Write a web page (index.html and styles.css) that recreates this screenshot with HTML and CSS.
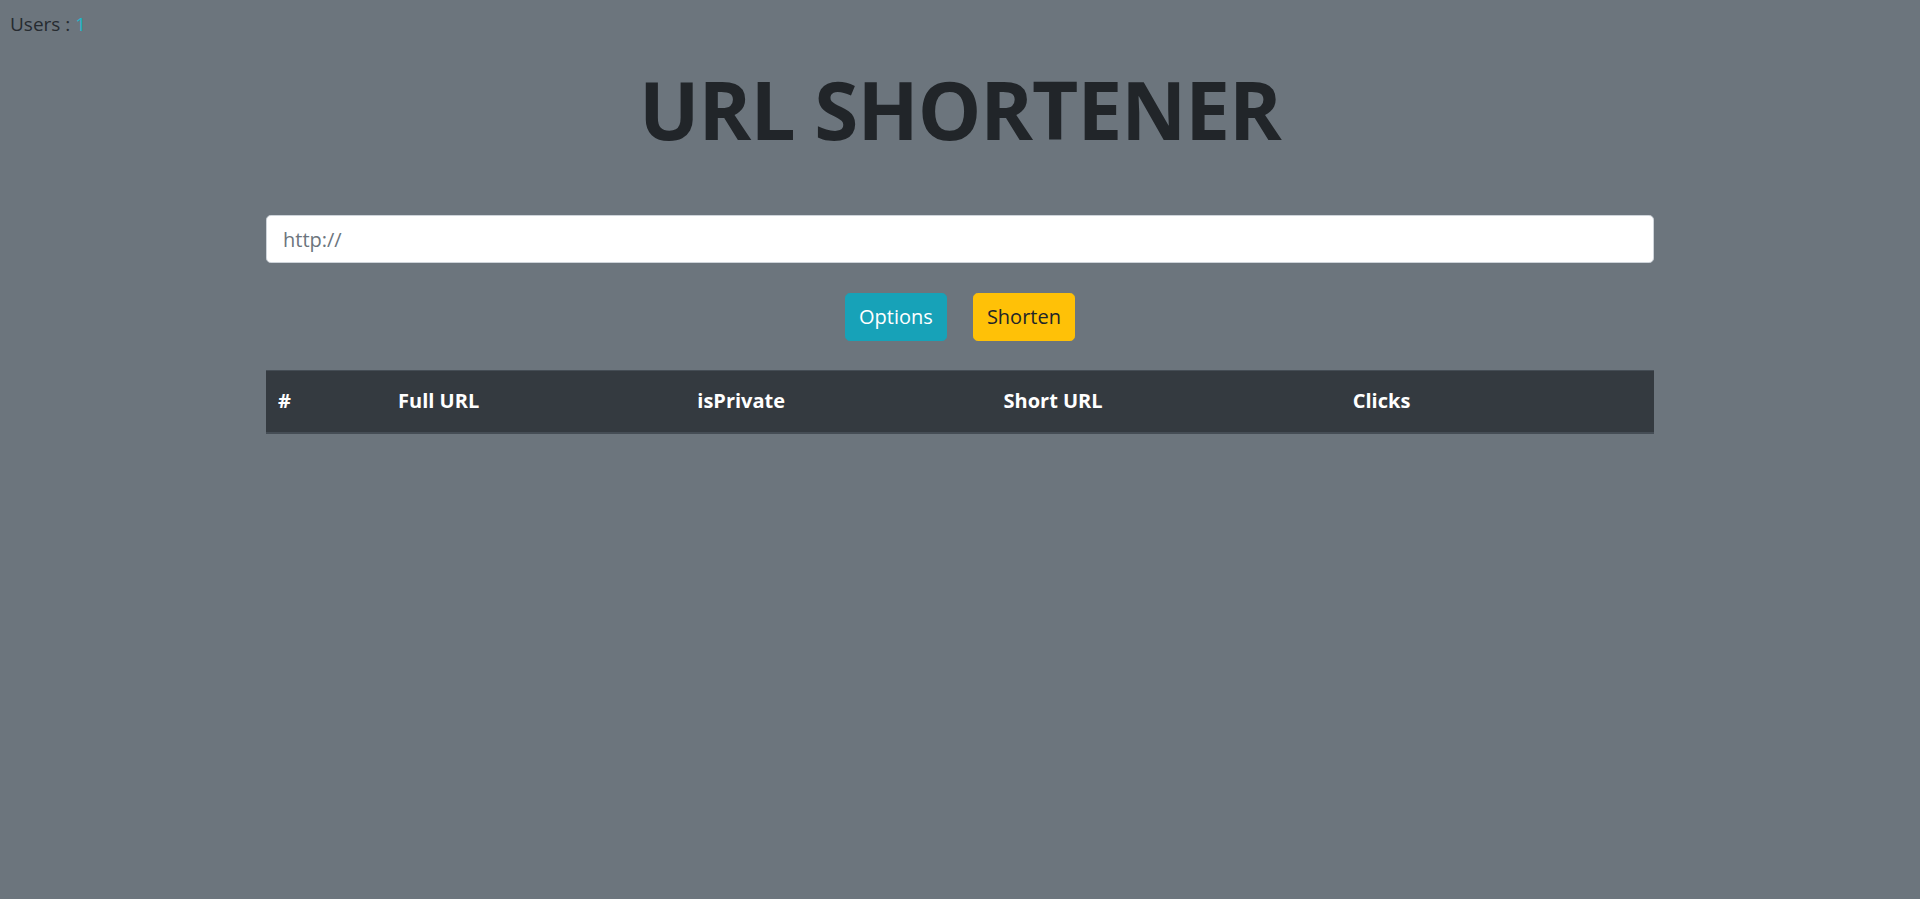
FILE: index.html
```html
<!DOCTYPE html>
<html lang="en">
<head>
<meta charset="utf-8">
<title>URL Shortener</title>
<link rel="stylesheet" href="styles.css">
</head>
<body>
<div class="users">Users : <span class="users-count">1</span></div>
<main class="container">
  <h1 class="title">URL SHORTENER</h1>
  <form class="shorten-form">
    <input class="url-input" type="text" placeholder="http://">
    <div class="actions">
      <button type="button" class="btn btn-info">Options</button>
      <button type="submit" class="btn btn-warning">Shorten</button>
    </div>
  </form>
  <table class="url-table">
    <thead>
      <tr>
        <th class="col-num">#</th>
        <th class="col-full">Full URL</th>
        <th class="col-private">isPrivate</th>
        <th class="col-short">Short URL</th>
        <th class="col-clicks">Clicks</th>
      </tr>
    </thead>
    <tbody></tbody>
  </table>
</main>
</body>
</html>
```

FILE: styles.css
```css
* { box-sizing: border-box; }

html, body {
  margin: 0;
  padding: 0;
}

body {
  background: #6c757d;
  color: #212529;
  font-family: "Open Sans", "Noto Sans", sans-serif;
  font-size: 16px;
  line-height: 1.5;
  min-height: 899px;
}

.users {
  padding: 9px 10px 0;
  font-size: 19px;
  line-height: 30px;
  color: #262b30;
}

.users-count {
  color: #1fb5c9;
}

.container {
  width: 1388px;
  margin: 0 auto;
}

.title {
  margin: 22px 0 0;
  font-size: 80px;
  line-height: 96px;
  font-weight: 700;
  letter-spacing: -1px;
  text-align: center;
  color: #212529;
}

.shorten-form {
  margin-top: 58px;
}

.url-input {
  display: block;
  width: 100%;
  height: 48px;
  padding: 8px 16px;
  font-family: inherit;
  font-size: 20px;
  line-height: 1.5;
  color: #495057;
  background: #fff;
  border: 1px solid #ced4da;
  border-radius: 4.8px;
  outline: none;
}

.url-input::placeholder {
  color: #6c757d;
  opacity: 1;
}

.actions {
  display: flex;
  justify-content: center;
  gap: 26px;
  margin-top: 30px;
}

.btn {
  height: 48px;
  padding: 8px 13px;
  font-family: inherit;
  font-size: 20px;
  line-height: 1.5;
  border: 1px solid transparent;
  border-radius: 4.8px;
  cursor: pointer;
}

.btn-info {
  background: #17a2b8;
  border-color: #17a2b8;
  color: #fff;
}

.btn-warning {
  background: #ffc107;
  border-color: #ffc107;
  color: #212529;
}

.url-table {
  width: 100%;
  margin-top: 29px;
  border-collapse: collapse;
}

.url-table th {
  padding: 15px 12px 16px;
  font-size: 20px;
  line-height: 30px;
  font-weight: 700;
  text-align: left;
  color: #fff;
  background: #343a40;
  border-top: 1px solid #454d55;
  border-bottom: 2px solid #454d55;
}

.col-num { width: 120px; }
.col-full { width: 299px; }
.col-private { width: 306px; }
.col-short { width: 349px; }
.col-clicks { width: 313px; }
```
